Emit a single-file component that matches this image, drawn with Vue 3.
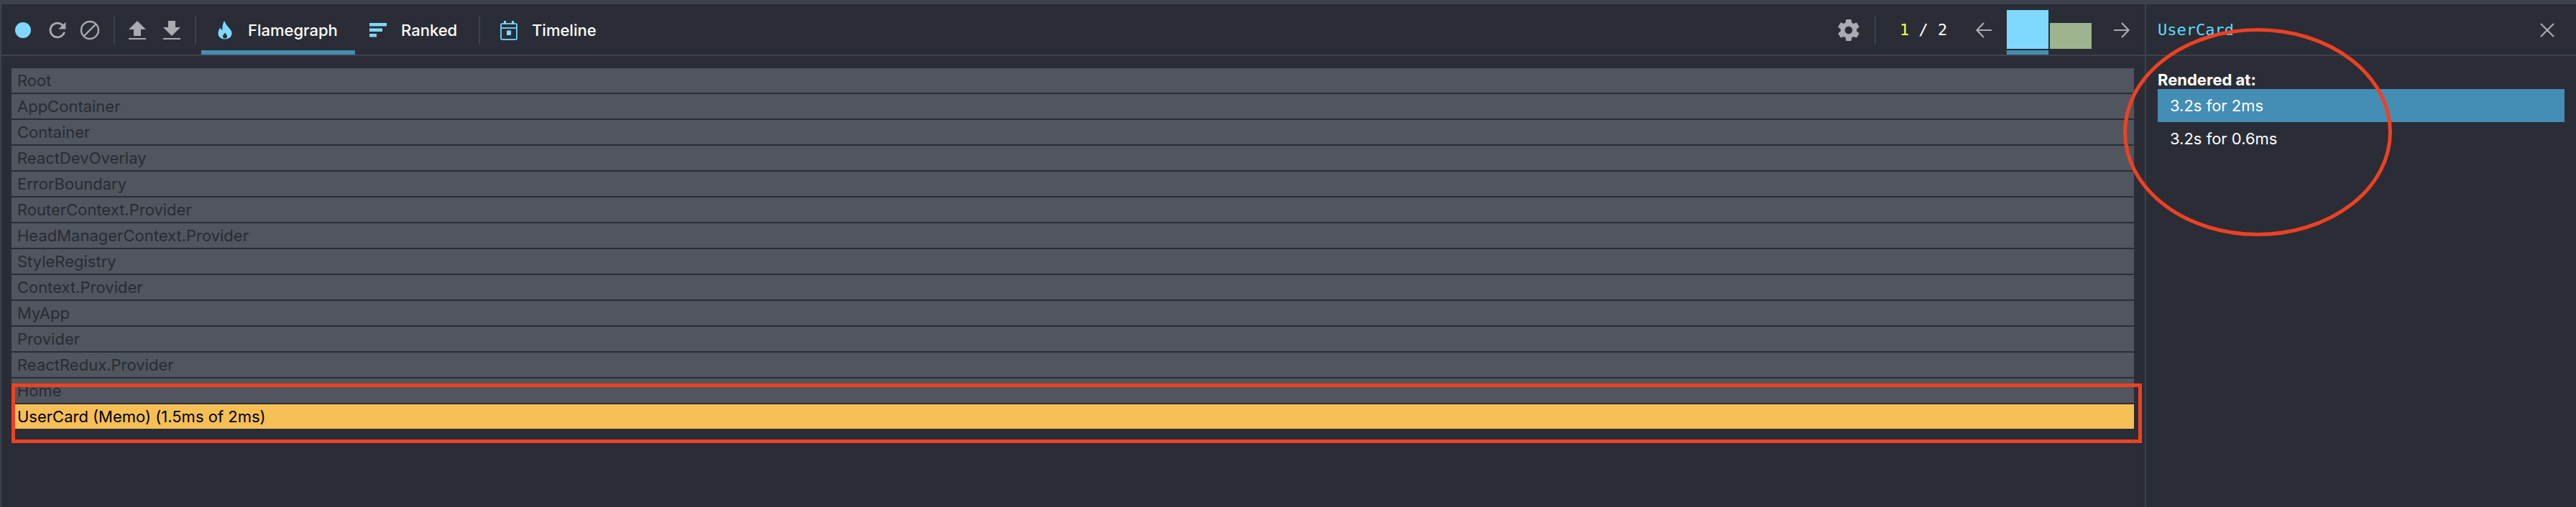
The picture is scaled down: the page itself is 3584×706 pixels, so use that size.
<script setup>
const rows = ['Root','AppContainer','Container','ReactDevOverlay','ErrorBoundary','RouterContext.Provider','HeadManagerContext.Provider','StyleRegistry','Context.Provider','MyApp','Provider','ReactRedux.Provider','Home']
</script>

<template>
  <div class="app">
    <main class="main">
      <header class="toolbar">
        <svg class="ic rec" width="22" height="22" viewBox="0 0 22 22"><circle cx="11" cy="11" r="11" fill="#7fd8ff"/></svg>
        <svg class="ic reload" width="34" height="34" viewBox="0 0 24 24"><path fill="#a8abb0" d="M17.65 6.35C16.2 4.9 14.21 4 12 4c-4.42 0-7.99 3.58-7.99 8s3.57 8 7.99 8c3.73 0 6.84-2.55 7.73-6h-2.08c-.82 2.33-3.04 4-5.65 4-3.31 0-6-2.69-6-6s2.69-6 6-6c1.66 0 3.14.69 4.22 1.78L13 11h7V4l-2.35 2.35z"/></svg>
        <svg class="ic clear" width="28" height="28" viewBox="0 0 28 28"><circle cx="14" cy="14" r="12" fill="none" stroke="#a8abb0" stroke-width="2.4"/><path d="M6 22L22 6" stroke="#a8abb0" stroke-width="2.4"/></svg>
        <span class="sep sep1"></span>
        <svg class="ic up" width="24" height="26" viewBox="0 0 24 26"><path fill="#a8abb0" d="M12 0L24 12H17V21H7V12H0ZM0 24H24V26H0Z"/></svg>
        <svg class="ic down" width="24" height="26" viewBox="0 0 24 26"><path fill="#a8abb0" d="M7 0H17V9H24L12 21L0 9H7ZM0 24H24V26H0Z"/></svg>
        <span class="sep sep2"></span>
        <button class="tab tab-flame">
          <svg width="20" height="26" viewBox="0 0 20 26"><path fill="#7fd8ff" fill-rule="evenodd" d="M9 0C10.5 3 11.5 5 14 8C17 11.5 19.5 13.5 19.5 17.5C19.5 22.5 15 25.5 10 25.5C4.500 25.500 0.500 22 0.500 17.500C0.500 14 2 11.500 3.500 9.500C4 11.500 5 12.500 6.500 13C6 8 7 4 9 0ZM10 16.500C8.500 18.500 7 20 7 22C7 23.500 8.300 24.300 10 24.300C11.700 24.300 13 23.500 13 22C13 20 11.500 18.500 10 16.500Z"/></svg>
          <span>Flamegraph</span>
        </button>
        <button class="tab tab-ranked">
          <svg width="24" height="20" viewBox="0 0 24 20"><path fill="#7fd8ff" d="M0 0H24V4.500H0ZM0 7.500H18V12H0ZM0 15H10V19.500H0Z"/></svg>
          <span>Ranked</span>
        </button>
        <span class="sep sep3"></span>
        <button class="tab tab-time">
          <svg width="24" height="27" viewBox="0 0 24 27"><path fill="none" stroke="#66c6ea" stroke-width="2" d="M3 4H21A2 2 0 0 1 23 6V24A2 2 0 0 1 21 26H3A2 2 0 0 1 1 24V6A2 2 0 0 1 3 4ZM1 10H23"/><path fill="#7fd8ff" d="M5 0H8V4H5ZM16 0H19V4H16ZM9 13.500H15V20H9Z"/></svg>
          <span>Timeline</span>
        </button>
        <div class="spacer"></div>
        <svg class="ic gear" width="36" height="36" viewBox="0 0 24 24"><path fill="#a8abb0" d="M19.43 12.98c.04-.32.07-.64.07-.98s-.03-.66-.07-.98l2.11-1.65c.19-.15.24-.42.12-.64l-2-3.46c-.12-.22-.39-.3-.61-.22l-2.49 1c-.52-.4-1.08-.73-1.69-.98l-.38-2.65C14.46 2.180 14.250 2 14 2h-4c-.25 0-.46.18-.49.42l-.38 2.65c-.61.25-1.17.59-1.69.98l-2.49-1c-.23-.09-.49 0-.61.22l-2 3.46c-.13.22-.07.49.12.64l2.11 1.65c-.04.32-.07.65-.07.98s.03.66.07.98l-2.11 1.65c-.19.15-.24.42-.12.64l2 3.46c.12.22.39.3.61.22l2.49-1c.52.4 1.08.73 1.69.98l.38 2.65c.03.24.24.42.49.42h4c.25 0 .46-.18.49-.42l.38-2.65c.61-.25 1.17-.59 1.69-.98l2.49 1c.23.09.49 0 .61-.22l2-3.46c.12-.22.07-.49-.12-.64l-2.11-1.65zM12 15.500c-1.930 0-3.500-1.570-3.500-3.500s1.570-3.500 3.500-3.500 3.500 1.570 3.500 3.500-1.570 3.500-3.500 3.500z"/></svg>
        <span class="sep sep4"></span>
        <div class="count"><span class="cur">1</span><span> / </span><span>2</span></div>
        <svg class="ic prev" width="22" height="22" viewBox="0 0 22 22"><path fill="none" stroke="#a8abb0" stroke-width="2.200" d="M22 11H2M11 1L1.500 11L11 21"/></svg>
        <div class="commits">
          <div class="commit sel"><i class="bar b1"></i></div>
          <div class="commit"><i class="bar b2"></i></div>
        </div>
        <svg class="ic next" width="22" height="22" viewBox="0 0 22 22"><path fill="none" stroke="#a8abb0" stroke-width="2.200" d="M0 11H20M11 1L20.500 11L11 21"/></svg>
      </header>
      <div class="chart">
        <div v-for="r in rows" :key="r" class="row">{{ r }}</div>
        <div class="row hit">UserCard (Memo) (1.5ms of 2ms)</div>
      </div>
    </main>
    <aside class="side">
      <header class="side-head">
        <span class="name">UserCard</span>
        <svg width="20" height="20" viewBox="0 0 20 20"><path d="M1 1L19 19M19 1L1 19" stroke="#a8abb0" stroke-width="2.200"/></svg>
      </header>
      <div class="side-body">
        <div class="label">Rendered at:</div>
        <div class="item on">3.2s for 2ms</div>
        <div class="item">3.2s for 0.6ms</div>
      </div>
    </aside>
    <div class="mark-rect"></div>
    <svg class="mark-ell" width="376" height="290" viewBox="0 0 376 290"><ellipse cx="188" cy="145" rx="184.500" ry="142.500" fill="none" stroke="#ee4123" stroke-width="5"/></svg>
  </div>
</template>

<style>
html, body { margin: 0; background: #2a2d35; }
</style>

<style scoped>
.app { position: relative; width: 3584px; height: 706px; box-sizing: border-box; display: flex; background: #2a2d35; border-top: 6px solid #3d424a; border-left: 2px solid #3d424a; font-family: Inter, "Liberation Sans", sans-serif; overflow: hidden; }
.app::before { content: ""; position: absolute; left: -2px; right: 0; top: -6px; height: 2px; background: #33363c; }
.main { width: 2982px; flex: none; display: flex; flex-direction: column; }
.toolbar { height: 70px; flex: none; display: flex; align-items: center; border-bottom: 2px solid #3d424a; padding-top: 2px; box-sizing: content-box; height: 68px; }
.ic { flex: none; display: block; }
.rec { margin-left: 19px; }
.reload { margin-left: 20px; }
.clear { margin-left: 14px; }
.sep { flex: none; width: 2px; height: 40px; background: #3d424a; }
.sep1 { margin-left: 19px; }
.up { margin-left: 19px; }
.down { margin-left: 24px; }
.sep2 { margin-left: 20px; }
.tab { flex: none; display: flex; align-items: center; height: 68px; background: none; border: 0; color: #fff; font: 500 22px/1 Inter, sans-serif; box-sizing: border-box; padding: 0; }
.tab-flame { width: 214px; margin-left: 7px; padding-left: 23px; gap: 22px; border-bottom: 6px solid #448db5; padding-top: 6px; margin-top: 2px; align-self: flex-end; }
.tab-ranked { width: 146px; padding-left: 20px; gap: 20px; }
.sep3 { margin-left: 26px; }
.tab-time { margin-left: 28px; gap: 20px; }
.spacer { flex: 1; }
.gear { margin-right: 18px; }
.sep4 { margin-right: 33px; }
.count { font: 22px/1 "DejaVu Sans Mono", monospace; color: #fff; white-space: pre; width: 74px; letter-spacing: 0; word-spacing: 0; }
.cur { color: #ffff4f; }
.prev { margin-left: 32px; }
.commits { display: flex; gap: 2px; margin-left: 21px; height: 68px; align-self: flex-end; margin-top: 2px; }
.commit { width: 58px; height: 62px; border-bottom: 6px solid transparent; display: flex; flex-direction: column; justify-content: flex-end; padding-bottom: 2px; box-sizing: content-box; height: 54px; padding-top: 6px; }
.commit.sel { border-bottom-color: #448db5; }
.bar { display: block; width: 58px; }
.b1 { height: 54px; background: #7fd8ff; }
.b2 { height: 36px; background: #9db48e; }
.next { margin-left: 31px; margin-right: 21px; }
.chart { flex: 1; padding: 17px 15px 0 14px; display: flex; flex-direction: column; gap: 2px; }
.row { height: 34px; line-height: 34px; padding-left: 8px; background: #51555e; color: #282c34; font-size: 22px; white-space: nowrap; }
.row.hit { background: #f5bf55; color: #000; }
.side { flex: 1; border-left: 2px solid #3d424a; min-width: 0; }
.side-head { height: 68px; margin-top: 2px; padding: 0 30px 0 16px; border-bottom: 2px solid #3d424a; display: flex; align-items: center; justify-content: space-between; }
.name { font: 22px/1 "DejaVu Sans Mono", monospace; color: #61dafb; }
.side-body { padding: 20px 16px 0; color: #fff; font-size: 22px; }
.label { font-weight: 700; line-height: 26px; height: 26px; }
.item { height: 46px; line-height: 46px; padding-left: 17px; }
.item.on { background: #448db5; }
.mark-rect { position: absolute; left: 14px; top: 528px; width: 2964px; height: 83px; box-sizing: border-box; border: 5px solid #ee4123; }
.mark-ell { position: absolute; left: 2951px; top: 33px; }
</style>
